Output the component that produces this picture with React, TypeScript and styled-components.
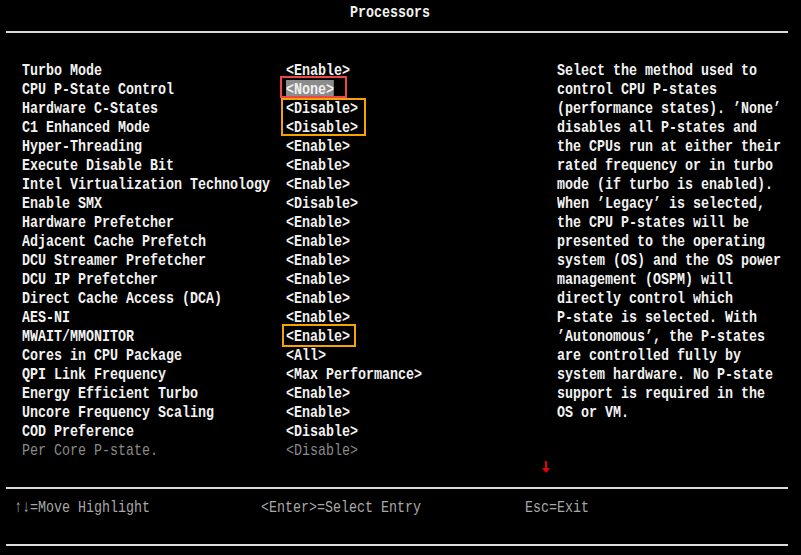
import React from "react";
import styled, { createGlobalStyle } from "styled-components";

const GlobalStyle = createGlobalStyle`
  html, body { margin: 0; padding: 0; background: #000; }
  body { width: 801px; height: 555px; overflow: hidden; }
`;

const Screen = styled.div`
  position: relative;
  width: 801px;
  height: 555px;
  overflow: hidden;
  background: #000;
  display: flex;
  flex-direction: column;
  font-family: "Liberation Mono", "DejaVu Sans Mono", monospace;
  font-size: 17px;
  line-height: 19px;
  color: #f2f2f2;
`;

const Glyphs = styled.span<{ $center?: boolean; $hl?: boolean }>`
  display: inline-block;
  white-space: pre;
  transform: scaleX(0.784);
  transform-origin: ${(p) => (p.$center ? "center" : "left")};
  background: ${(p) => (p.$hl ? "#8c8c8c" : "transparent")};
`;

const Header = styled.div`
  height: 31px;
  flex: none;
  box-sizing: border-box;
  display: flex;
  justify-content: center;
  padding: 3px 21px 0 0;
  font-weight: bold;
`;

const Rule = styled.div`
  height: 2px;
  margin: 0 13px 0 6px;
  background: #dcdcdc;
  flex: none;
`;

const Main = styled.div`
  height: 454px;
  flex: none;
  display: flex;
  padding-top: 28px;
  box-sizing: border-box;
  overflow: hidden;
`;

const SettingsList = styled.div`
  margin-left: 22px;
  display: grid;
  grid-template-columns: 264px 271px;
  grid-auto-rows: 19px;
  align-content: start;
  font-weight: bold;
`;

const Cell = styled.div<{ $dim?: boolean }>`
  height: 19px;
  color: ${(p) => (p.$dim ? "#8a8a8a" : "#f2f2f2")};
  font-weight: ${(p) => (p.$dim ? "normal" : "bold")};
  white-space: nowrap;
`;

const Help = styled.div`
  flex: 1;
  min-width: 0;
  overflow: hidden;
  display: flex;
  flex-direction: column;
  font-weight: bold;
`;

const HelpLine = styled.div`
  height: 19px;
  white-space: nowrap;
`;

const Footer = styled.div`
  height: 55px;
  flex: none;
  box-sizing: border-box;
  padding: 9px 0 0 14px;
  display: grid;
  grid-template-columns: 247px 264px auto;
  align-content: start;
  color: #a8a8a8;
`;

const Mark = styled.div<{ $x: number; $y: number; $w: number; $h: number; $c: string }>`
  position: absolute;
  left: ${(p) => p.$x}px;
  top: ${(p) => p.$y}px;
  width: ${(p) => p.$w}px;
  height: ${(p) => p.$h}px;
  box-sizing: border-box;
  border: 2px solid ${(p) => p.$c};
  pointer-events: none;
`;

const Arrow = styled.svg`
  position: absolute;
  left: 541px;
  top: 460px;
`;

const settings: { label: string; value: string; hl?: boolean; dim?: boolean }[] = [
  { label: "Turbo Mode", value: "<Enable>" },
  { label: "CPU P-State Control", value: "<None>", hl: true },
  { label: "Hardware C-States", value: "<Disable>" },
  { label: "C1 Enhanced Mode", value: "<Disable>" },
  { label: "Hyper-Threading", value: "<Enable>" },
  { label: "Execute Disable Bit", value: "<Enable>" },
  { label: "Intel Virtualization Technology", value: "<Enable>" },
  { label: "Enable SMX", value: "<Disable>" },
  { label: "Hardware Prefetcher", value: "<Enable>" },
  { label: "Adjacent Cache Prefetch", value: "<Enable>" },
  { label: "DCU Streamer Prefetcher", value: "<Enable>" },
  { label: "DCU IP Prefetcher", value: "<Enable>" },
  { label: "Direct Cache Access (DCA)", value: "<Enable>" },
  { label: "AES-NI", value: "<Enable>" },
  { label: "MWAIT/MMONITOR", value: "<Enable>" },
  { label: "Cores in CPU Package", value: "<All>" },
  { label: "QPI Link Frequency", value: "<Max Performance>" },
  { label: "Energy Efficient Turbo", value: "<Enable>" },
  { label: "Uncore Frequency Scaling", value: "<Enable>" },
  { label: "COD Preference", value: "<Disable>" },
  { label: "Per Core P-state.", value: "<Disable>", dim: true },
];

const help = [
  "Select the method used to",
  "control CPU P-states",
  "(performance states). ’None’",
  "disables all P-states and",
  "the CPUs run at either their",
  "rated frequency or in turbo",
  "mode (if turbo is enabled).",
  "When ’Legacy’ is selected,",
  "the CPU P-states will be",
  "presented to the operating",
  "system (OS) and the OS power",
  "management (OSPM) will",
  "directly control which",
  "P-state is selected. With",
  "’Autonomous’, the P-states",
  "are controlled fully by",
  "system hardware. No P-state",
  "support is required in the",
  "OS or VM.",
];

export default function App() {
  return (
    <Screen>
      <GlobalStyle />
      <Header>
        <Glyphs $center>Processors</Glyphs>
      </Header>
      <Rule />
      <Main>
        <SettingsList>
          {settings.map((s) => (
            <React.Fragment key={s.label}>
              <Cell $dim={s.dim}>
                <Glyphs>{s.label}</Glyphs>
              </Cell>
              <Cell $dim={s.dim}>
                <Glyphs $hl={s.hl}>{s.value}</Glyphs>
              </Cell>
            </React.Fragment>
          ))}
        </SettingsList>
        <Help>
          {help.map((l, i) => (
            <HelpLine key={i}>
              <Glyphs>{l}</Glyphs>
            </HelpLine>
          ))}
        </Help>
      </Main>
      <Rule />
      <Footer>
        <Glyphs>↑↓=Move Highlight</Glyphs>
        <Glyphs>{"<Enter>=Select Entry"}</Glyphs>
        <Glyphs>Esc=Exit</Glyphs>
      </Footer>
      <Rule />
      <Mark $x={280} $y={76} $w={67} $h={22} $c="#ee4646" />
      <Mark $x={281} $y={98} $w={85} $h={38} $c="#f5a300" />
      <Mark $x={282} $y={324} $w={74} $h={23} $c="#f5a300" />
      <Arrow width="10" height="14" viewBox="0 0 10 14">
        <line x1="5" y1="1" x2="5" y2="9" stroke="#e60000" strokeWidth="2" />
        <polygon points="1,8 9,8 5,13" fill="#e60000" />
      </Arrow>
    </Screen>
  );
}
